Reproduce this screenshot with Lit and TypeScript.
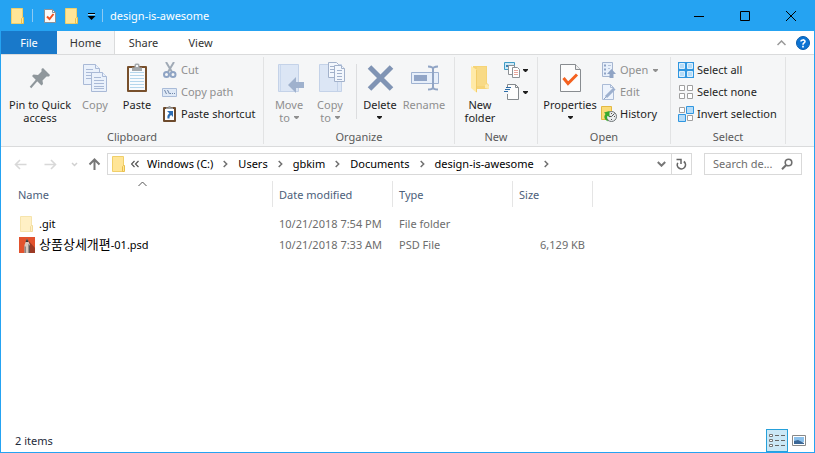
import { LitElement, html, svg, css, nothing, TemplateResult } from "lit";
import { customElement, property } from "lit/decorators.js";

const icon = (w: number, h: number, body: unknown) =>
  html`<svg width=${w} height=${h} viewBox="0 0 ${w} ${h}" fill="none" aria-hidden="true">${body}</svg>`;

const folder = icon(16, 16, svg`<path d="M1.5.5h11v15h-11z" fill="#ffe597" stroke="#f0cf69"/><path d="M11.500 15.500v-5l1-1h1v6z" fill="#ffe597" stroke="#e9bf4a"/>`);
const checkDoc = icon(16, 16, svg`<path d="M2.5 1.5h8l3 3v10h-11z" fill="#fafafa" stroke="#8b9299"/><path d="M10.5 1.5v3h3" stroke="#8b9299"/><path d="M5 8.5l2.5 2.5 4-5" stroke="#f4511e" stroke-width="2"/>`);
const qatArrow = icon(10, 10, svg`<path d="M2 2.500h7" stroke="#000"/><path d="M2 3.500h7" stroke="#fff" stroke-opacity=".6"/><path d="M1.500 5h8l-4 4z" fill="#000"/>`);
const down = icon(5, 3, svg`<path d="M0 0h5v1L3 3H2L0 1z" fill="currentColor"/>`);

const big = {
  pin: icon(32, 32, svg`<path d="M19 6L26 13L25 14.500L22.500 14.500L18.500 18.500L19 22L17.500 23.500L8 14L9.500 12.500L14 13L17.500 9.500V7z" fill="#8f979c"/><path d="M13 18l-6.500 7.500" stroke="#8f979c" stroke-width="2"/>`),
  copy: icon(32, 32, svg`<g fill="#eaf1fb" stroke="#a9b9d6"><path d="M4.500 2.500h12l4 4v16h-16z"/><path d="M16.500 2.500v4h4"/><path d="M7 7.500h7M7 10.500h11M7 13.500h5M7 16.500h5"/><path d="M12.500 10.500h11l4 4v15h-15z"/><path d="M23.500 10.500v4h4M15 15.500h7M15 18.500h10M15 21.500h10M15 24.500h10M15 26.500h10"/></g>`),
  paste: icon(32, 32, svg`<rect x="6" y="4" width="20" height="26" rx="1" fill="#78502c"/><rect x="8" y="6" width="16" height="22" fill="#f8fbfe"/><path d="M9 10.500h14M9 13.500h14M9 16.500h14M9 19.500h14M9 22.500h14M9 25.500h14" stroke="#b4d6ec"/><path d="M11 9V5.500h2.500V3a1.500 1.500 0 0 1 1.500-1.500h2A1.500 1.500 0 0 1 18.500 3v2.500H21V9z" fill="#a4a9ad"/><rect x="15" y="3" width="2" height="2" fill="#f5f6f7"/>`),
  move: icon(32, 32, svg`<path d="M5.500 2.500h20v27h-20z" fill="#dce6f5" stroke="#c4d2e8"/><path d="M7.500 3v26" stroke="#c9d8ee"/><path d="M15 23l8-8v5h8v6h-8v5z" fill="#9fb1cd"/>`),
  copyTo: icon(32, 32, svg`<path d="M5.500 2.500h22v27h-22z" fill="#dce6f5" stroke="#c4d2e8"/><path d="M23.500 16v13" stroke="#c4d2e8"/><g fill="#f3f7fd" stroke="#a3b2cb"><path d="M14.500.500h8l2 2v13h-10z"/><path d="M16 4.500h6M16 7.500h6M16 10.500h6"/><path d="M20.500 3.500h7l3 3v13h-10z"/><path d="M27.500 3.500v3h3M23 8.500h5M23 11.500h5M23 14.500h5M23 17.500h5"/></g>`),
  del: icon(32, 32, svg`<path d="M5.500 5l22 22M27.500 5l-22 22" stroke="#8094b4" stroke-width="5"/>`),
  rename: icon(32, 32, svg`<path d="M3.500 10.500h27v11h-27z" fill="#e7effa" stroke="#9fb2d1"/><rect x="6" y="13" width="13" height="6" fill="#91a5c7"/><path d="M25 5v22M20 4.500c3 0 5 .500 5 2.500 0-2 2-2.500 5-2.500M20 27.500c3 0 5-.500 5-2.500 0 2 2 2.500 5 2.500" stroke="#91a5c5" stroke-width="2"/>`),
  newFolder: icon(32, 32, svg`<path d="M9 4h14v17l2 2v4H9z" fill="#f6d477"/><path d="M13 5h9v19h-9z" fill="#f8da86"/><path d="M21 26v-3l2-1 2 2v3z" fill="#fdeab0"/><path d="M7 4l6 4v23l-6-5z" fill="#ffeaa8"/><path d="M12.500 8v22" stroke="#f3cd68"/>`),
  props: icon(32, 32, svg`<path d="M6.500 2.500h15l5 5v22h-20z" fill="#fcfcfc" stroke="#888c90"/><path d="M21.500 2.500v5h5" fill="#eee" stroke="#888c90"/><path d="M9.500 16l4.500 5.500 9-9" stroke="#f4611f" stroke-width="3"/>`),
};

const small = {
  cut: icon(16, 16, svg`<path d="M4 0l6 10M12 0L6 10" stroke="#a0aab6" stroke-width="2"/><circle cx="4.500" cy="12.500" r="2.500" stroke="#8fa4c4" stroke-width="2"/><circle cx="11" cy="12.500" r="2.500" stroke="#8fa4c4" stroke-width="2"/>`),
  path: icon(16, 16, svg`<path d="M.500 4.500h14v8H.500z" fill="#dfe9f6" stroke="#a9bbd8"/><path d="M2.500 6l2 4M5.500 6l2 4" stroke="#6f86a9"/><path d="M8 9.500h1M10 9.500h1M12 9.500h1" stroke="#6f86a9"/>`),
  shortcut: icon(16, 16, svg`<rect x="1" y="1" width="13" height="15" rx="1" fill="#6d4a2c"/><rect x="3" y="3" width="9" height="11" fill="#fff"/><path d="M4 3V1.500h2.500V0h2v1.500H11V3z" fill="#999fa4"/><path d="M5 5h6v6L9.200 9C7.500 10 7.500 11 7.500 12.500H5.500C5 10 6 8.500 7.400 7.300z" fill="#2d6db3"/>`),
  open: icon(16, 16, svg`<path d="M1.500.500h10v14h-10z" fill="#e8f0fb" stroke="#a5b5d0"/><path d="M3 3.500h2M3 7.500h2M3 11.500h2" stroke="#8fa3c5" stroke-width="2"/><path d="M7 3.500h3M7 6.500h2" stroke="#b4c3da"/><path d="M10.500 7l4.500 5h-2.500v4h-4v-4H6z" fill="#90a4c5"/>`),
  edit: icon(16, 16, svg`<path d="M1.500.500h8l3 3v12h-11z" fill="#edf3fc" stroke="#aabbd6"/><path d="M9.500.500v3h3" stroke="#aabbd6"/><path d="M5 13l8.500-8.500" stroke="#9db0ce" stroke-width="3"/><path d="M3 15l2.500-2.500" stroke="#8fa3c5"/>`),
  history: icon(16, 16, svg`<path d="M.500.500h10v13H.500z" fill="#fbdc78" stroke="#e3b944"/><circle cx="10.500" cy="10.500" r="5" fill="#e9ecee" stroke="#6e7477"/><path d="M10.500 10.500l3-3M10.500 10.500H8M10.500 7v1M10.500 13v1M14 10.500h-1" stroke="#555"/><path d="M8.500 5L3 6.500 4.500 8C2 11 4 14.500 7.500 15.500 5.500 13 5.500 11 6.800 9.800L8.500 11.500z" fill="#3aa92f"/>`),
  all: icon(16, 16, svg`<path d="M0 0h16v16H0z" fill="#2f96e0"/><path d="M1.500 1.500h5v5h-5zM9.500 1.500h5v5h-5zM1.500 9.500h5v5h-5zM9.500 9.500h5v5h-5z" fill="#b5dcf8" stroke="#dff0fc"/>`),
  none: icon(16, 16, svg`<path d="M1.500 1.500h5v5h-5zM9.500 1.500h5v5h-5zM1.500 9.500h5v5h-5zM9.500 9.500h5v5h-5z" fill="#fff" stroke="#a0a0a0"/>`),
  invert: icon(16, 16, svg`<path d="M1.500 1.500h5v5h-5zM9.500 9.500h5v5h-5z" fill="#fff" stroke="#a0a0a0"/><path d="M8.500.500h7v7h-7zM.500 8.500h7v7h-7z" fill="#b5dcf8" stroke="#2f96e0"/>`),
  newItem: icon(16, 16, svg`<path d="M.500.500h10v7H.500z" fill="#cfe9f6" stroke="#3f9cc6"/><path d="M2 4h6" stroke="#3a83b5" stroke-width="2"/><path d="M4.500 3.500h6v9h-6z" fill="#fff" stroke="#8d9195"/><path d="M8.500 5.500h5l2 2v8h-7z" fill="#fff" stroke="#8d9195"/><path d="M10 8.500h4M10 10.500h4M10 12.500h4" stroke="#e8a79d"/>`),
  easy: icon(16, 16, svg`<path d="M3.500.500h8l3 3v12h-11z" fill="#fdfdfd" stroke="#84898d"/><path d="M11.500.500v3h3" stroke="#84898d"/><path d="M2 5.500h4M0 7.500h5" stroke="#f5f6f7" stroke-width="5"/><path d="M2 3.500h5M1 5.500h5M0 7.500h4" stroke="#2d6da8"/>`),
};

const chevron = icon(5, 8, svg`<path d="M.700 1l3 3-3 3" stroke="#707070" stroke-width="1.500"/>`);

@customElement("ribbon-group")
class RibbonGroup extends LitElement {
  @property() label = "";
  static styles = css`
    :host { display: grid; grid-template-rows: 72px 15px; border-right: 1px solid #e2e3e4; margin: 2px 0; }
    .items { display: flex; padding: 0 4px; }
    .name { text-align: center; color: #5a5a5a; line-height: 15px; white-space: nowrap; }
  `;
  render() {
    return html`<div class="items"><slot></slot></div><div class="name">${this.label}</div>`;
  }
}

@customElement("app-root")
class AppRoot extends LitElement {
  static styles = css`
    :host { display: flex; flex-direction: column; min-height: 100vh; box-sizing: border-box; border: 1px solid #25a3f2; border-top: 0; background: #fff; color: #1e1e1e; font: 11px/16px "Noto Sans", "Noto Sans CJK KR", sans-serif; }
    button, input { font: inherit; color: inherit; border: 0; background: none; padding: 0; margin: 0; }
    svg { display: block; flex: none; }
    .title { display: flex; align-items: center; height: 31px; background: #25a3f2; padding-left: 9px; gap: 6px; }
    .bar { width: 1px; height: 13px; background: #8ccaf3; }
    .bar.first { margin-right: 3px; }
    .caption { flex: 1; color: #fff; font-weight: 400; font-size: 11px; margin: 0 0 0 1px; white-space: nowrap; }
    .win { display: flex; align-self: stretch; }
    .win button { width: 46px; display: grid; place-items: center; }
    .tabs { display: flex; height: 23px; }
    .tabs button { width: 57px; line-height: 23px; color: #333; }
    .tabs .file { width: 56px; background: #1979ca; color: #fff; }
    .tabs .on { width: 58px; background: #f5f6f7; border-right: 1px solid #dadbdc; }
    .tools { margin-left: auto; display: flex; align-items: center; gap: 8px; padding-right: 4px; }
    .tools button { width: 14px; display: grid; place-items: center; }
    .ribbon { display: grid; grid-template-columns: 263px 191px 83px 133px 115px; background: #f5f6f7; border: solid #dadbdc; border-width: 1px 0; }
    .big { display: flex; flex-direction: column; align-items: center; gap: 4px; padding-top: 5px; line-height: 13px; white-space: nowrap; }
    .lines { display: flex; flex-direction: column; align-items: center; }
    .line { display: flex; align-items: center; gap: 4px; min-height: 13px; }
    .off { color: #8f8f8f; }
    .w40 { width: 40px; } .w42 { width: 42px; } .w44 { width: 44px; } .w46 { width: 46px; } .w56 { width: 56px; } .w70 { width: 70px; }
    .col { display: flex; flex-direction: column; padding: 2px 3px 0; }
    .small { display: flex; align-items: center; gap: 3px; height: 22px; white-space: nowrap; }
    .small .down { margin-left: 2px; }
    .rule { width: 1px; height: 55px; margin: 7px 2px 0 6px; background: #dcdddf; }
    .nav { display: flex; align-items: center; padding: 6px 12px 5px 9px; }
    .nav .go { width: 20px; height: 22px; display: grid; place-items: center; margin-right: 10px; }
    .nav .go.recent { width: 14px; margin: 0 5px 0 -3px; }
    .nav .go.up { width: 16px; margin-right: 5px; }
    .address { flex: 1; display: flex; align-items: center; height: 22px; box-sizing: border-box; border: 1px solid #d9d9d9; min-width: 0; color: #000; padding-left: 3px; }
    .crumb { white-space: nowrap; }
    .sep { width: 25px; display: grid; place-items: center; }
    .more { width: 20px; padding-left: 4px; }
    .drop { margin-left: auto; width: 20px; height: 20px; display: grid; place-items: center; }
    .reload { width: 20px; height: 20px; border-left: 1px solid #d9d9d9; display: grid; place-items: center; }
    .search { display: flex; align-items: center; width: 98px; height: 22px; box-sizing: border-box; border: 1px solid #d9d9d9; margin-left: 12px; padding: 0 8px; }
    .search input { width: 100%; min-width: 0; flex: 1; outline: 0; }
    .search input::placeholder { color: #6d6d6d; opacity: 1; }
    main { flex: 1; }
    table { border-collapse: separate; border-spacing: 0; table-layout: fixed; width: 100%; margin-top: 1px; }
    .c1 { width: 272px; } .c2, .c3 { width: 120px; } .c4 { width: 80px; }
    th { position: relative; height: 26px; padding: 2px 0 0 6px; box-sizing: border-box; text-align: left; font-weight: 400; color: #4c607a; border-right: 1px solid #e5e5e5; }
    th:first-child { padding-left: 17px; }
    th:last-child { border: 0; }
    .sort { position: absolute; left: 137px; top: 0; }
    td { height: 21px; padding: 0 8px 0 6px; color: #6d6d6d; white-space: nowrap; }
    tbody tr:first-child td { padding-top: 6px; }
    td:first-child { padding-left: 18px; color: #000; }
    .size { text-align: right; }
    .name { display: flex; align-items: center; gap: 4px; }
    .ko { font-size: 13px; line-height: 16px; }
    .hidden { opacity: 0.55; }
    footer { display: flex; align-items: center; justify-content: space-between; height: 24px; padding: 0 4px 0 14px; color: #1e2a3a; }
    .count { padding-top: 2px; }
    .views { display: flex; }
    .views button { width: 22px; height: 23px; display: grid; place-items: center; box-sizing: border-box; }
    .views .on { background: #cbe8f6; border: 1px solid #26a0da; }
  `;

  private big(ic: TemplateResult, lines: string[], w: string, off = false, arrow = false) {
    return html`<button class="big ${w} ${off ? "off" : ""}" ?disabled=${off}>${ic}<span class="lines">${lines.map(
      (l, i) => html`<span class="line">${l}${arrow && lines.length > 1 && i === lines.length - 1 ? down : nothing}</span>`
    )}${arrow && lines.length === 1 ? html`<span class="line">${down}</span>` : nothing}</span></button>`;
  }

  private small(ic: TemplateResult, text: string, off = false, arrow = false) {
    return html`<button class="small ${off ? "off" : ""}" ?disabled=${off}>${ic}${text ? html`<span>${text}</span>` : nothing}${arrow ? html`<span class=${text ? "down" : ""}>${down}</span>` : nothing}</button>`;
  }

  render() {
    return html`
      <header class="title">
        ${folder}<span class="bar first"></span>
        <button aria-label="Properties">${checkDoc}</button>
        <button aria-label="New folder">${folder}</button>
        <button aria-label="Customize">${qatArrow}</button>
        <span class="bar"></span>
        <h1 class="caption">design-is-awesome</h1>
        <div class="win">
          <button aria-label="Minimize">${icon(10, 10, svg`<path d="M0 5.500h10" stroke="#000"/>`)}</button>
          <button aria-label="Maximize">${icon(10, 10, svg`<path d="M.500.500h9v9h-9z" stroke="#000"/>`)}</button>
          <button aria-label="Close">${icon(10, 10, svg`<path d="M0 0l10 10M10 0L0 10" stroke="#000"/>`)}</button>
        </div>
      </header>
      <nav class="tabs">
        <button class="file">File</button><button class="on">Home</button><button>Share</button><button>View</button>
        <div class="tools">
          <button aria-label="Collapse ribbon">${icon(9, 6, svg`<path d="M.500 5l4-4 4 4" stroke="#999" stroke-width="1.500"/>`)}</button>
          <button aria-label="Help">${icon(14, 14, svg`<circle cx="7" cy="7" r="6.500" fill="#0c73d3" stroke="#0a5cab"/><path d="M5 5.500C5 3.500 9 3.300 9 5.500 9 7 7 7 7 8.700" stroke="#fff" stroke-width="1.600"/><path d="M7 9.800v1.700" stroke="#fff" stroke-width="1.700"/>`)}</button>
        </div>
      </nav>
      <section class="ribbon">
        <ribbon-group label="Clipboard">
          ${this.big(big.pin, ["Pin to Quick", "access"], "w70")}
          ${this.big(big.copy, ["Copy"], "w40", true)}
          ${this.big(big.paste, ["Paste"], "w44")}
          <div class="col">
            ${this.small(small.cut, "Cut", true)}
            ${this.small(small.path, "Copy path", true)}
            ${this.small(small.shortcut, "Paste shortcut")}
          </div>
        </ribbon-group>
        <ribbon-group label="Organize">
          ${this.big(big.move, ["Move", "to"], "w42", true, true)}
          ${this.big(big.copyTo, ["Copy", "to"], "w40", true, true)}
          <span class="rule"></span>
          ${this.big(big.del, ["Delete"], "w42", false, true)}
          ${this.big(big.rename, ["Rename"], "w46", true)}
        </ribbon-group>
        <ribbon-group label="New">
          ${this.big(big.newFolder, ["New", "folder"], "w42")}
          <div class="col">
            ${this.small(small.newItem, "", false, true)}
            ${this.small(small.easy, "", false, true)}
          </div>
        </ribbon-group>
        <ribbon-group label="Open">
          ${this.big(big.props, ["Properties"], "w56", false, true)}
          <div class="col">
            ${this.small(small.open, "Open", true, true)}
            ${this.small(small.edit, "Edit", true)}
            ${this.small(small.history, "History")}
          </div>
        </ribbon-group>
        <ribbon-group label="Select">
          <div class="col">
            ${this.small(small.all, "Select all")}
            ${this.small(small.none, "Select none")}
            ${this.small(small.invert, "Invert selection")}
          </div>
        </ribbon-group>
      </section>
      <nav class="nav">
        <button class="go" aria-label="Back">${icon(13, 11, svg`<path d="M12.500 5.500h-11M6 1L1.500 5.500 6 10" stroke="#d8d8d8" stroke-width="1.600"/>`)}</button>
        <button class="go" aria-label="Forward">${icon(13, 11, svg`<path d="M.500 5.500h11M7 1l4.500 4.500L7 10" stroke="#d8d8d8" stroke-width="1.600"/>`)}</button>
        <button class="go recent" aria-label="Recent locations">${icon(7, 5, svg`<path d="M1 1l2.500 2.500L6 1" stroke="#d0d0d0" stroke-width="1.500"/>`)}</button>
        <button class="go up" aria-label="Up">${icon(13, 12, svg`<path d="M6.500 12V1.500M1.500 6.500l5-5 5 5" stroke="#777" stroke-width="2"/>`)}</button>
        <div class="address">
          ${folder}<button class="more" aria-label="More">${icon(8, 8, svg`<path d="M3.500 1l-3 3 3 3M7.500 1l-3 3 3 3" stroke="#555" stroke-width="1.200"/>`)}</button>
          ${["Windows (C:)", "Users", "gbkim", "Documents", "design-is-awesome"].map(
            (c) => html`<button class="crumb">${c}</button><span class="sep">${chevron}</span>`
          )}
          <button class="drop" aria-label="Previous locations">${icon(9, 6, svg`<path d="M.800 1l3.700 3.700L8.200 1" stroke="#777" stroke-width="2"/>`)}</button>
          <button class="reload" aria-label="Refresh">${icon(11, 12, svg`<path d="M7.800 3.500A4.100 4.100 0 1 1 1.800 4.800" stroke="#666" stroke-width="1.600"/><path d="M.500 1.500h4.500V6" stroke="#666" stroke-width="1.500"/>`)}</button>
        </div>
        <label class="search"><input type="text" aria-label="Search" placeholder="Search de..." />${icon(12, 12, svg`<circle cx="7.500" cy="4.500" r="3.300" stroke="#6f6f6f" stroke-width="1.600"/><path d="M5.200 7L1 11.200" stroke="#6f6f6f" stroke-width="2"/>`)}</label>
      </nav>
      <main>
        <table>
          <colgroup><col class="c1" /><col class="c2" /><col class="c3" /><col class="c4" /><col /></colgroup>
          <thead>
            <tr><th>Name<span class="sort">${icon(9, 6, svg`<path d="M.500 5l4-4 4 4" stroke="#555"/>`)}</span></th><th>Date modified</th><th>Type</th><th>Size</th><th></th></tr>
          </thead>
          <tbody>
            <tr><td><span class="name"><span class="hidden">${folder}</span>.git</span></td><td>10/21/2018 7:54 PM</td><td>File folder</td><td class="size"></td><td></td></tr>
            <tr><td><span class="name">${icon(16, 16, svg`<path d="M0 0h16v16H0z" fill="#e2522d"/><path d="M8 2l8 9v5H8z" fill="#9c3a25"/><path d="M8 1.500L11 8v8H5.500V8z" fill="#d9c9bf"/><path d="M8 1.500L9.500 5h-3z" fill="#333"/><path d="M9.500 7l1.500 1.500V16H9.500z" fill="#5b5657"/><path d="M5.500 9.500H7V16H5.500z" fill="#8b8687"/>`)}<span><span class="ko" lang="ko">상품상세개편</span>-01.psd</span></span></td><td>10/21/2018 7:33 AM</td><td>PSD File</td><td class="size">6,129 KB</td><td></td></tr>
          </tbody>
        </table>
      </main>
      <footer>
        <span class="count">2 items</span>
        <div class="views">
          <button class="on" aria-label="Details view">${icon(16, 13, svg`<path d="M.500.500h3v2h-3zM.500 5.500h3v2h-3zM.500 10.500h3v2h-3z" fill="#fff" stroke="#777"/><path d="M6 1.500h4M12 1.500h4M6 6.500h4M12 6.500h4M6 11.500h4M12 11.500h4" stroke="#666"/>`)}</button>
          <button aria-label="Large icons view">${icon(14, 11, svg`<path d="M.500.500h13v10H.500z" fill="#fff" stroke="#888"/><path d="M2 2h10v5H2z" fill="#8cc1ec"/><path d="M2 9V6l4-1 6 3v1z" fill="#3b6796"/>`)}</button>
        </div>
      </footer>
    `;
  }
}
